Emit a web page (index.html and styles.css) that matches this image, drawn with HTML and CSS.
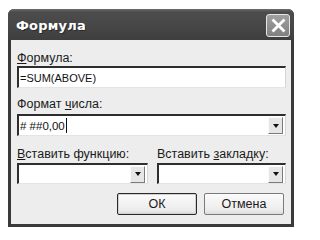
FILE: index.html
```html
<!DOCTYPE html>
<html lang="ru">
<head>
<meta charset="utf-8">
<title>Формула</title>
<link rel="stylesheet" href="styles.css">
</head>
<body>
<div class="window">
  <div class="titlebar">
    <span class="title">Формула</span>
    <button class="close" aria-label="Закрыть">
      <svg width="15" height="15" viewBox="0 0 15 15"><path d="M2.5 2.5 L12.5 12.5 M12.5 2.5 L2.5 12.5" stroke="#fff" stroke-width="2.8" stroke-linecap="square"/></svg>
    </button>
  </div>
  <div class="content">
    <div class="label label-first"><u>Ф</u>ормула:</div>
    <div class="field text">=SUM(ABOVE)</div>
    <div class="label label-second">Формат <u>ч</u>исла:</div>
    <div class="field combo">
      <span class="value">#&nbsp;##0,00<span class="caret"></span></span>
      <span class="drop"><span class="tri"></span></span>
    </div>
    <div class="pair">
      <div class="col">
        <div class="label label-third"><u>В</u>ставить функцию:</div>
        <div class="field combo small">
          <span class="value"></span>
          <span class="drop"><span class="tri"></span></span>
        </div>
      </div>
      <div class="col">
        <div class="label label-third">Вставить <u>з</u>акладку:</div>
        <div class="field combo small">
          <span class="value"></span>
          <span class="drop"><span class="tri"></span></span>
        </div>
      </div>
    </div>
    <div class="buttons">
      <button class="btn default">ОК</button>
      <button class="btn">Отмена</button>
    </div>
  </div>
</div>
</body>
</html>
```
FILE: styles.css
```css
html, body {
  margin: 0;
  padding: 0;
  background: #ffffff;
}
body {
  padding: 9px 0 0 8px;
  font-family: "Liberation Sans", Arial, sans-serif;
  font-size: 12.5px;
  color: #1a1a1a;
}
.window {
  width: 286px;
  height: 218px;
  box-sizing: border-box;
  display: flex;
  flex-direction: column;
  background: #3a3a3a;
  border-radius: 6px 6px 0 0;
  overflow: hidden;
}
.titlebar {
  height: 31px;
  flex: none;
  display: flex;
  align-items: center;
  justify-content: space-between;
  padding: 0 4px 0 8px;
  background: linear-gradient(#6c6c6c 0px, #4c4c4c 3px, #464646 60%, #3e3e3e 100%);
}
.title {
  font-family: "DejaVu Sans", Verdana, sans-serif;
  font-weight: bold;
  font-size: 13px;
  color: #ffffff;
  letter-spacing: 0.2px;
  text-shadow: 1px 1px 0 #2a2a2a;
  margin-top: 1px;
}
.close {
  width: 24px;
  height: 23px;
  padding: 0;
  margin-top: 2px;
  border: 1px solid #e6e6e6;
  border-radius: 3px;
  background: linear-gradient(#a0a0a0, #808080);
  display: flex;
  align-items: center;
  justify-content: center;
}
.content {
  flex: 1;
  margin: 0 3px 3px 3px;
  background: #ededed;
  padding: 0 5px 0 6px;
  display: flex;
  flex-direction: column;
}
.label {
  height: 14px;
  line-height: 14px;
  white-space: nowrap;
}
.label u {
  text-decoration-thickness: 1px;
  text-underline-offset: 1px;
}
.label-first { margin-top: 11px; margin-bottom: 1px; }
.label-second { margin-top: 9px; margin-bottom: 3px; }
.label-third { margin-top: 11px; margin-bottom: 2px; }
.field {
  box-sizing: border-box;
  height: 22px;
  background: #ffffff;
  border-top: 2px solid #2e2e2e;
  border-left: 2px solid #2e2e2e;
  border-right: 1px solid #d6d6d6;
  border-bottom: 1px solid #e4e4e4;
  font-size: 11.5px;
  display: flex;
  align-items: center;
  padding-left: 1px;
  color: #111;
}
.text {
  font-size: 11px;
}
.combo {
  justify-content: space-between;
  padding-right: 2px;
}
.value {
  display: flex;
  align-items: center;
  white-space: nowrap;
}
.caret {
  display: inline-block;
  width: 1px;
  height: 15px;
  background: #111;
  margin-left: 1px;
}
.drop {
  width: 15px;
  height: 17px;
  box-sizing: border-box;
  background: #e6e6e6;
  border-top: 1px solid #fafafa;
  border-left: 1px solid #fafafa;
  border-right: 1px solid #7a7a7a;
  border-bottom: 1px solid #7a7a7a;
  display: flex;
  align-items: center;
  justify-content: center;
}
.tri {
  width: 0;
  height: 0;
  border-left: 3.5px solid transparent;
  border-right: 3.5px solid transparent;
  border-top: 4px solid #111;
}
.small {
  height: 21px;
}
.pair {
  display: flex;
  gap: 9px;
}
.col {
  display: flex;
  flex-direction: column;
}
.col:first-child { width: 131px; }
.col:last-child { flex: 1; }
.buttons {
  display: flex;
  justify-content: flex-end;
  gap: 7px;
  margin-top: 9px;
  padding-right: 2px;
}
.btn {
  width: 80px;
  height: 22px;
  font-family: "Liberation Sans", Arial, sans-serif;
  font-size: 12.5px;
  color: #1a1a1a;
  background: linear-gradient(#fbfbfb, #ececec 80%, #dcdcdc);
  border: 1px solid #7a7a7a;
  border-radius: 2px;
  padding: 0;
}
.btn.default {
  border: 1px solid #2a2a2a;
  box-shadow: inset 0 0 0 1px #cfcfcf;
}
```
